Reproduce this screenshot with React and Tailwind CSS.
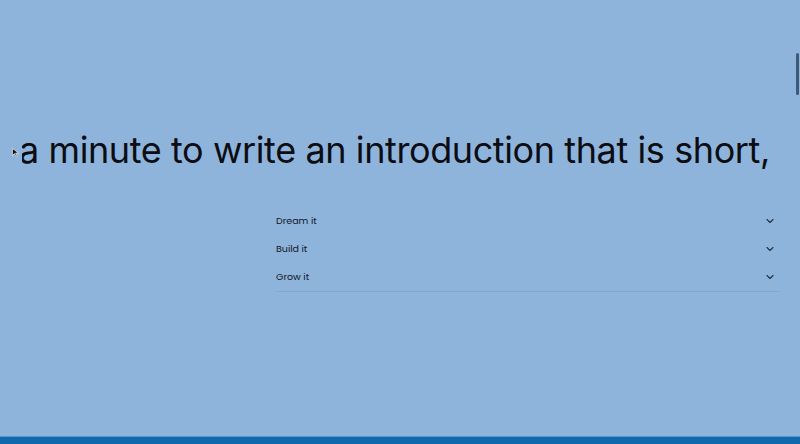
import React from 'react';
import { ChevronDown } from 'lucide-react';

const items = ['Dream it', 'Build it', 'Grow it'];

export default function App() {
  return (
    <div className="relative w-[800px] h-[444px] overflow-hidden bg-[#8fb4dc] flex flex-col" style={{ fontFamily: 'Inter, sans-serif' }}>
      <div className="flex-1 flex flex-col">
        {/* marquee line */}
        <div className="mt-[126px] ml-[22px] overflow-hidden whitespace-nowrap">
          <div className="-ml-[3px] text-[36px] leading-[48px] tracking-[-0.4px] text-[#0b0d12]">
            a minute to write an introduction that is short,
          </div>
        </div>

        {/* accordion */}
        <div className="mt-[33px] ml-[276px] w-[504px] border-b border-[#80a8d2]" style={{ fontFamily: 'Poppins, "Open Sans", sans-serif' }}>
          {items.map((t) => (
            <div key={t} className="h-[28px] flex items-center justify-between pr-[4px]">
              <span className="text-[9.5px] text-[#10161f]">{t}</span>
              <ChevronDown className="w-[12px] h-[12px] text-[#22314a]" strokeWidth={2.25} />
            </div>
          ))}
        </div>
      </div>

      <div className="h-[8px] bg-[#1169ad] border-t border-[#5f95c6]" />

      {/* scrollbar thumb */}
      <div className="absolute right-[1px] top-[53px] w-[3px] h-[42px] rounded-full bg-[#3d5a78]" />

      {/* cursor */}
      <svg className="absolute left-[12px] top-[148px]" width="7" height="9" viewBox="0 0 7 9">
        <path d="M0.5 0.5 L0.5 7.5 L2.5 5.5 L4 8.5 L5 8 L3.6 5 L6.5 5 Z" fill="#111" stroke="#fff" strokeWidth="0.6" />
      </svg>
    </div>
  );
}
